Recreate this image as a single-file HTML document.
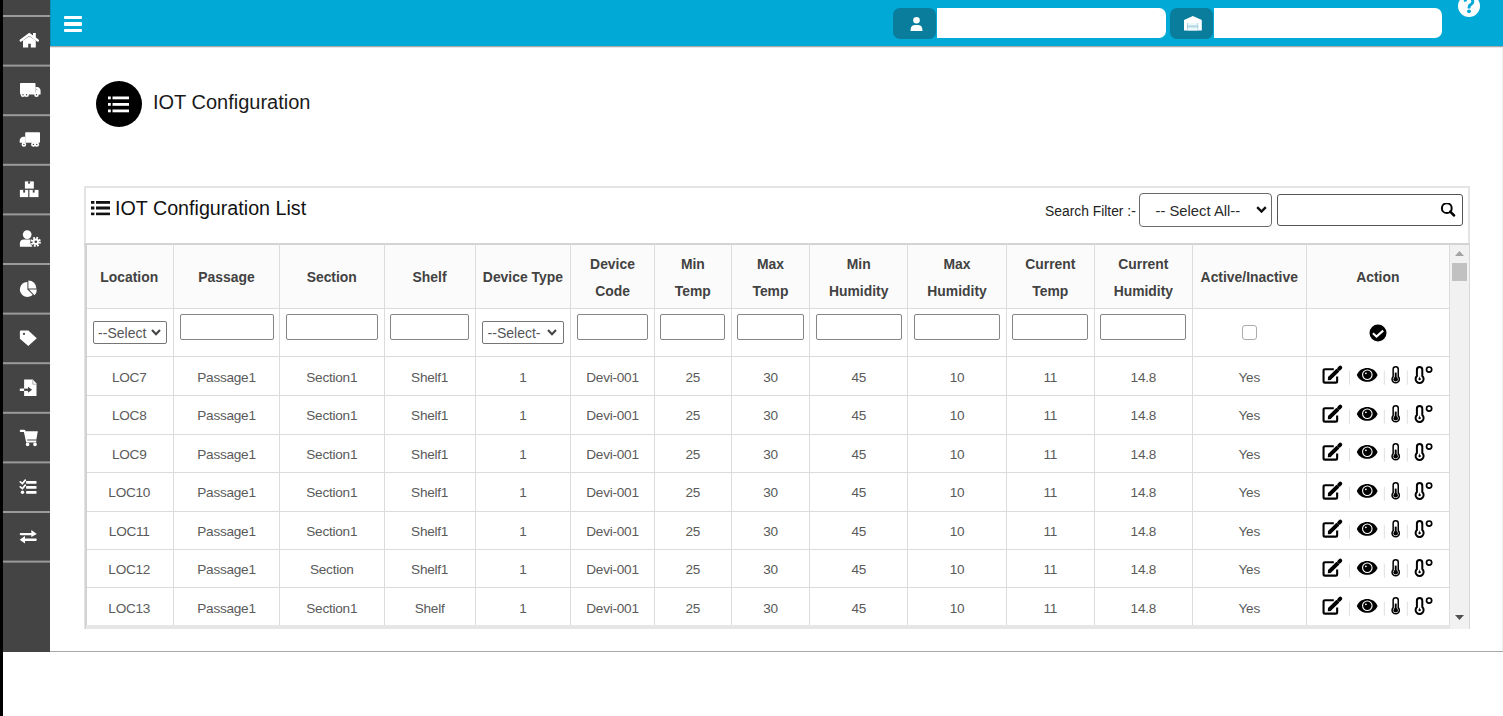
<!DOCTYPE html>
<html><head><meta charset="utf-8"><style>
html,body{margin:0;padding:0;}
body{width:1503px;height:716px;position:relative;overflow:hidden;background:#fff;font-family:"Liberation Sans",sans-serif;}
</style></head><body>
<div style="position:absolute;left:0px;top:0px;width:3px;height:716px;background:#000"></div><div style="position:absolute;left:3px;top:0px;width:47px;height:651.5px;background:#444444"></div><svg style="position:absolute;left:3px;top:0px" width="47" height="600" viewBox="0 0 47 600"><rect x="0" y="15.00" width="47" height="2" fill="#9a9a9a"/><rect x="0" y="64.60" width="47" height="2" fill="#9a9a9a"/><rect x="0" y="114.20" width="47" height="2" fill="#9a9a9a"/><rect x="0" y="163.80" width="47" height="2" fill="#9a9a9a"/><rect x="0" y="213.40" width="47" height="2" fill="#9a9a9a"/><rect x="0" y="263.00" width="47" height="2" fill="#9a9a9a"/><rect x="0" y="312.60" width="47" height="2" fill="#9a9a9a"/><rect x="0" y="362.20" width="47" height="2" fill="#9a9a9a"/><rect x="0" y="411.80" width="47" height="2" fill="#9a9a9a"/><rect x="0" y="461.40" width="47" height="2" fill="#9a9a9a"/><rect x="0" y="511.00" width="47" height="2" fill="#9a9a9a"/><rect x="0" y="560.60" width="47" height="2" fill="#9a9a9a"/></svg><div style="position:absolute;left:16px;top:28px;width:28px;height:24px;line-height:0"><svg width="28" height="24" viewBox="0 0 28 24"><path d="M4.8 12.5 L13.3 6.3 L21.8 12.5" stroke="#fff" stroke-width="2.5" stroke-linecap="round" stroke-linejoin="miter" fill="none"/><rect x="17" y="5" width="2.8" height="5.5" fill="#fff"/><path d="M7 12.6 L13.3 8.3 L19.8 12.6 L19.8 19.5 L14.8 19.5 L14.8 15.8 L12.2 15.8 L12.2 19.5 L7 19.5 Z" fill="#fff"/></svg></div><div style="position:absolute;left:16px;top:78px;width:28px;height:24px;line-height:0"><svg width="28" height="24" viewBox="0 0 28 24"><rect x="4" y="5" width="15.5" height="11.4" rx="0.8" fill="#fff"/><path d="M19.5 8.9 L21.5 8.9 Q24.6 9.6 24.6 13 L24.6 16.4 L19.5 16.4 Z" fill="#fff"/><circle cx="7" cy="16.8" r="2.3" fill="#fff"/><circle cx="10.6" cy="16.8" r="2.3" fill="#fff"/><circle cx="20.5" cy="16.8" r="2.3" fill="#fff"/><circle cx="7" cy="16.8" r="0.7" fill="#444444"/><circle cx="10.6" cy="16.8" r="0.7" fill="#444444"/><circle cx="20.5" cy="16.8" r="0.7" fill="#444444"/><circle cx="20.5" cy="11.5" r="0.8" fill="#bbb"/></svg></div><div style="position:absolute;left:16px;top:127px;width:28px;height:24px;line-height:0"><svg width="28" height="24" viewBox="0 0 28 24"><rect x="9.2" y="5.2" width="14.8" height="10.6" rx="0.8" fill="#fff"/><path d="M9.2 9.7 L7 9.7 Q3.7 10.4 3.7 14 L3.7 15.8 L9.2 15.8 Z" fill="#fff"/><circle cx="7.9" cy="17.4" r="2.3" fill="#fff"/><circle cx="17.4" cy="17.4" r="2.3" fill="#fff"/><circle cx="20.8" cy="17.4" r="2.3" fill="#fff"/><circle cx="7.9" cy="17.4" r="0.7" fill="#444444"/><circle cx="17.4" cy="17.4" r="0.7" fill="#444444"/><circle cx="20.8" cy="17.4" r="0.7" fill="#444444"/></svg></div><div style="position:absolute;left:16px;top:177px;width:28px;height:24px;line-height:0"><svg width="28" height="24" viewBox="0 0 28 24"><rect x="8.9" y="4.4" width="8.9" height="7.2" fill="#fff"/><rect x="3.9" y="12.9" width="8.3" height="7.2" fill="#fff"/><rect x="13.4" y="12.9" width="9.1" height="7.2" fill="#fff"/><rect x="12.1" y="4.4" width="2" height="2.2" fill="#444444"/><rect x="7.2" y="12.9" width="1.9" height="2.7" fill="#444444"/><rect x="16.8" y="12.9" width="1.8" height="2.7" fill="#444444"/></svg></div><div style="position:absolute;left:16px;top:226px;width:28px;height:24px;line-height:0"><svg width="28" height="24" viewBox="0 0 28 24"><circle cx="11.2" cy="8.6" r="4.35" fill="#fff"/><path d="M3.9 20.8 L3.9 17.5 Q3.9 13.4 8 13.4 L13.5 13.4 Q15.5 13.4 16.3 14 L16.3 20.8 Z" fill="#fff"/><circle cx="19.8" cy="15.8" r="5.6" fill="#444444"/><circle cx="19.8" cy="15.8" r="3.9" fill="none" stroke="#fff" stroke-width="2.4" stroke-dasharray="1.7 1.36"/><circle cx="19.8" cy="15.8" r="3.3" fill="#fff"/><circle cx="19.8" cy="15.8" r="1.3" fill="#444444"/></svg></div><div style="position:absolute;left:16px;top:276px;width:28px;height:24px;line-height:0"><svg width="28" height="24" viewBox="0 0 28 24"><path d="M11.4 5.9 A7.5 7.5 0 1 0 16.7 18.7 L11.4 13.4 Z" fill="#fff"/><path d="M12.4 4.5 A8 8 0 0 1 20.4 12.5 L12.4 12.5 Z" fill="#fff"/><path d="M13 13.5 L20.8 13.5 A7.8 7.8 0 0 1 18.5 19.2 Z" fill="#fff"/></svg></div><div style="position:absolute;left:16px;top:326px;width:28px;height:24px;line-height:0"><svg width="28" height="24" viewBox="0 0 28 24"><path d="M3.9 5.4 Q3.9 4.4 4.9 4.4 L12.3 4.4 L20.8 12.3 L12.3 20.1 L3.9 12.7 Z" fill="#fff"/><circle cx="8" cy="7.9" r="1.1" fill="#444444"/></svg></div><div style="position:absolute;left:16px;top:375px;width:28px;height:24px;line-height:0"><svg width="28" height="24" viewBox="0 0 28 24"><path d="M8.1 4.5 L16.8 4.5 L20.5 8.6 L20.5 21 L8.1 21 Z" fill="#fff"/><path d="M16.8 4.5 L16.8 9.2 L20.5 9.2" fill="none" stroke="#9a9a9a" stroke-width="0.8"/><rect x="3.7" y="13.4" width="5" height="2.7" rx="1.2" fill="#fff"/><rect x="8.1" y="13.6" width="4.6" height="2.3" fill="#444444"/><path d="M12 11.7 L16.1 14.75 L12 17.8 Z" fill="#444444"/></svg></div><div style="position:absolute;left:16px;top:425px;width:28px;height:24px;line-height:0"><svg width="28" height="24" viewBox="0 0 28 24"><path d="M3.7 5.9 Q3.7 4.7 4.9 4.7 L8 4.7 Q9.2 4.7 9.5 5.8 L9.6 6.3 L21.8 6.3 L20.4 14.5 L11.2 14.5 L11.4 15.5 L20.3 15.5 L20.3 17.4 L10.2 17.4 L7.9 7 L4.9 7 Q3.7 7 3.7 5.9 Z" fill="#fff"/><circle cx="11.6" cy="19.4" r="1.8" fill="#fff"/><circle cx="19" cy="19.4" r="1.8" fill="#fff"/></svg></div><div style="position:absolute;left:16px;top:475px;width:28px;height:24px;line-height:0"><svg width="28" height="24" viewBox="0 0 28 24"><path d="M4.3 6.9 L6.4 8.6 L9.3 5.1" stroke="#fff" stroke-width="1.7" fill="none" stroke-linecap="round"/><path d="M4.3 11.9 L6.4 13.6 L9.3 10.1" stroke="#fff" stroke-width="1.7" fill="none" stroke-linecap="round"/><circle cx="6.5" cy="17.3" r="1.7" fill="#fff"/><rect x="10.1" y="6" width="10.4" height="2.8" rx="0.6" fill="#fff"/><rect x="10.1" y="11" width="10.4" height="2.8" rx="0.6" fill="#fff"/><rect x="10.1" y="15.9" width="10.4" height="2.9" rx="0.6" fill="#fff"/></svg></div><div style="position:absolute;left:16px;top:524px;width:28px;height:24px;line-height:0"><svg width="28" height="24" viewBox="0 0 28 24"><rect x="3.7" y="8.9" width="13" height="2.3" rx="1.1" fill="#fff"/><path d="M15.3 6.1 L20.8 10 L15.3 13.1 Z" fill="#fff"/><rect x="7.5" y="14.4" width="13.3" height="2.5" rx="1.1" fill="#fff"/><path d="M9 11.9 L3.7 15.7 L9 19.6 Z" fill="#fff"/></svg></div><div style="position:absolute;left:50px;top:0px;width:1453px;height:46px;background:#00a9d6"></div><div style="position:absolute;left:50px;top:0px;width:1px;height:46px;background:#0a8fb5"></div><div style="position:absolute;left:50px;top:46px;width:1453px;height:1px;background:#a9a9a9"></div><div style="position:absolute;left:50px;top:47px;width:1453px;height:1px;background:#e6e6e6"></div><div style="position:absolute;left:64px;top:16px;width:18.3px;height:3.2px;background:#fff;border-radius:1px"></div><div style="position:absolute;left:64px;top:22.4px;width:18.3px;height:3.2px;background:#fff;border-radius:1px"></div><div style="position:absolute;left:64px;top:28.9px;width:18.3px;height:3.2px;background:#fff;border-radius:1px"></div><div style="position:absolute;left:893px;top:7.8px;width:43.4px;height:30.8px;background:#0a7c9c;border-radius:7px"></div><div style="position:absolute;left:937px;top:7.6px;width:228.5px;height:30.8px;background:#fff;border-radius:0 7px 7px 0"></div><div style="position:absolute;left:910px;top:17px;width:13px;height:14px;line-height:0"><svg width="13" height="14" viewBox="0 0 13 14"><circle cx="6.5" cy="3.3" r="3.3" fill="#fff"/><path d="M0.5 14 Q0.5 8 4.5 8 L8.5 8 Q12.5 8 12.5 14 Z" fill="#fff"/></svg></div><div style="position:absolute;left:1170.3px;top:7.8px;width:42.7px;height:30.8px;background:#0a7c9c;border-radius:7px"></div><div style="position:absolute;left:1213.6px;top:7.6px;width:228.9px;height:30.8px;background:#fff;border-radius:0 7px 7px 0"></div><div style="position:absolute;left:1184.2px;top:16.2px;width:18px;height:15px;line-height:0"><svg width="18" height="15" viewBox="0 0 18 15"><path d="M0 4.1 L8.9 0 L17.8 4.1 L17.8 14.4 L0 14.4 Z" fill="#fff"/><rect x="3" y="7" width="11.2" height="7.4" fill="#eef7fa"/><rect x="3" y="9.3" width="11.2" height="2.2" fill="#b5d9e3"/><rect x="3" y="7" width="0.7" height="7.4" fill="#9ccbd9"/><rect x="13.5" y="7" width="0.7" height="7.4" fill="#9ccbd9"/></svg></div><div style="position:absolute;left:1458px;top:-5px;width:22px;height:22px;line-height:0"><svg width="22" height="22" viewBox="0 0 22 22"><circle cx="11" cy="11" r="11" fill="#fff"/><path d="M7.3 6.6 A3.7 3.7 0 1 1 13 9.4 Q11.1 10.4 11.1 12.1 L11.1 13.6" stroke="#00a9d6" stroke-width="2.9" fill="none"/><circle cx="11" cy="16.3" r="1.9" fill="#00a9d6"/></svg></div><div style="position:absolute;left:50px;top:651px;width:1453px;height:1.3px;background:#a8a8a8"></div><div style="position:absolute;left:1502px;top:47px;width:1px;height:604px;background:#efefef"></div><div style="position:absolute;left:96px;top:80.5px;width:46px;height:46px;border-radius:50%;background:#000"></div><div style="position:absolute;left:108px;top:96px;width:21px;height:17px;line-height:0"><svg width="21" height="17" viewBox="0 0 21 17"><rect x="0" y="0.5" width="2.8" height="2.8" fill="#fff"/><rect x="0" y="7" width="2.8" height="2.8" fill="#fff"/><rect x="0" y="13.5" width="2.8" height="2.8" fill="#fff"/><rect x="4.5" y="0.5" width="16.5" height="2.8" fill="#fff"/><rect x="4.5" y="7" width="16.5" height="2.8" fill="#fff"/><rect x="4.5" y="13.5" width="16.5" height="2.8" fill="#fff"/></svg></div><div style="position:absolute;left:153px;top:91px;white-space:nowrap;font-size:20px;color:#1a1a1a;font-family:"Liberation Sans",sans-serif;line-height:23px">IOT Configuration</div><div style="position:absolute;left:84px;top:186px;width:1386px;height:442.5px;border:2px solid #e4e4e4;box-sizing:border-box"></div><div style="position:absolute;left:91px;top:201px;width:19px;height:15px;line-height:0"><svg width="19" height="15" viewBox="0 0 19 15"><rect x="0" y="-0.3" width="3.4" height="3.1" fill="#111"/><rect x="0" y="5.5" width="3.4" height="3" fill="#111"/><rect x="0" y="11.6" width="3.4" height="2.6" fill="#111"/><rect x="5" y="-0.3" width="14" height="3.1" fill="#111"/><rect x="5" y="5.5" width="14" height="3" fill="#111"/><rect x="5" y="11.6" width="14" height="2.6" fill="#111"/></svg></div><div style="position:absolute;left:115px;top:196.8px;white-space:nowrap;font-size:19.7px;color:#111;line-height:23px">IOT Configuration List</div><div style="position:absolute;left:1045px;top:203px;white-space:nowrap;font-size:13.85px;color:#222;line-height:16px">Search Filter :-</div><div style="position:absolute;left:1139px;top:193px;width:133px;height:34px;border:1px solid #6a6a6a;border-radius:4px;box-sizing:border-box;background:#fff"></div><div style="position:absolute;left:1155.5px;top:203px;white-space:nowrap;font-size:14.8px;color:#2a2a2a;line-height:17px">-- Select All--</div><div style="position:absolute;left:1255.5px;top:206px;width:11px;height:8px;line-height:0"><svg width="11" height="8" viewBox="0 0 11 8"><path d="M1.2 1.2 L5.5 5.6 L9.8 1.2" stroke="#111" stroke-width="2.4" fill="none"/></svg></div><div style="position:absolute;left:1277px;top:194px;width:186px;height:32px;border:1px solid #555;border-radius:3px;box-sizing:border-box;background:#fff"></div><div style="position:absolute;left:1440px;top:203px;width:16px;height:15px;line-height:0"><svg width="16" height="15" viewBox="0 0 16 15"><circle cx="6.8" cy="5.2" r="4.9" stroke="#000" stroke-width="2" fill="none"/><path d="M10.2 8.7 L14.1 12.5" stroke="#000" stroke-width="2.5" stroke-linecap="round"/></svg></div><div style="position:absolute;left:86px;top:243.5px;width:1363.5px;height:64.8px;background:#fbfbfb"></div><div style="position:absolute;left:84px;top:243px;width:1386px;height:2px;background:#d3d3d3"></div><div style="position:absolute;left:86px;top:308px;width:1363.5px;height:1px;background:#dcdcdc"></div><div style="position:absolute;left:86px;top:356px;width:1363.5px;height:1px;background:#dcdcdc"></div><div style="position:absolute;left:86px;top:395px;width:1363.5px;height:1px;background:#dcdcdc"></div><div style="position:absolute;left:86px;top:434px;width:1363.5px;height:1px;background:#dcdcdc"></div><div style="position:absolute;left:86px;top:472px;width:1363.5px;height:1px;background:#dcdcdc"></div><div style="position:absolute;left:86px;top:511px;width:1363.5px;height:1px;background:#dcdcdc"></div><div style="position:absolute;left:86px;top:549px;width:1363.5px;height:1px;background:#dcdcdc"></div><div style="position:absolute;left:86px;top:587px;width:1363.5px;height:1px;background:#dcdcdc"></div><div style="position:absolute;left:173px;top:243.5px;width:1px;height:381.5px;background:#dcdcdc"></div><div style="position:absolute;left:279px;top:243.5px;width:1px;height:381.5px;background:#dcdcdc"></div><div style="position:absolute;left:383.5px;top:243.5px;width:1px;height:381.5px;background:#dcdcdc"></div><div style="position:absolute;left:474.7px;top:243.5px;width:1px;height:381.5px;background:#dcdcdc"></div><div style="position:absolute;left:570.1px;top:243.5px;width:1px;height:381.5px;background:#dcdcdc"></div><div style="position:absolute;left:653.9px;top:243.5px;width:1px;height:381.5px;background:#dcdcdc"></div><div style="position:absolute;left:730.8px;top:243.5px;width:1px;height:381.5px;background:#dcdcdc"></div><div style="position:absolute;left:809.1px;top:243.5px;width:1px;height:381.5px;background:#dcdcdc"></div><div style="position:absolute;left:907.3px;top:243.5px;width:1px;height:381.5px;background:#dcdcdc"></div><div style="position:absolute;left:1005.8px;top:243.5px;width:1px;height:381.5px;background:#dcdcdc"></div><div style="position:absolute;left:1093.8px;top:243.5px;width:1px;height:381.5px;background:#dcdcdc"></div><div style="position:absolute;left:1191.9px;top:243.5px;width:1px;height:381.5px;background:#dcdcdc"></div><div style="position:absolute;left:1305.6px;top:243.5px;width:1px;height:381.5px;background:#dcdcdc"></div><div style="position:absolute;left:1449px;top:243.5px;width:1px;height:381.5px;background:#dcdcdc"></div><div style="position:absolute;left:-20.75px;width:300px;text-align:center;top:264px;white-space:nowrap;font-size:13.9px;font-weight:bold;color:#424242;line-height:27px">Location</div><div style="position:absolute;left:76.5px;width:300px;text-align:center;top:264px;white-space:nowrap;font-size:13.9px;font-weight:bold;color:#424242;line-height:27px">Passage</div><div style="position:absolute;left:181.75px;width:300px;text-align:center;top:264px;white-space:nowrap;font-size:13.9px;font-weight:bold;color:#424242;line-height:27px">Section</div><div style="position:absolute;left:279.6px;width:300px;text-align:center;top:264px;white-space:nowrap;font-size:13.9px;font-weight:bold;color:#424242;line-height:27px">Shelf</div><div style="position:absolute;left:372.9px;width:300px;text-align:center;top:264px;white-space:nowrap;font-size:13.9px;font-weight:bold;color:#424242;line-height:27px">Device Type</div><div style="position:absolute;left:462.5px;width:300px;text-align:center;top:251px;white-space:nowrap;font-size:13.9px;font-weight:bold;color:#424242;line-height:27px">Device<br>Code</div><div style="position:absolute;left:542.85px;width:300px;text-align:center;top:251px;white-space:nowrap;font-size:13.9px;font-weight:bold;color:#424242;line-height:27px">Min<br>Temp</div><div style="position:absolute;left:620.45px;width:300px;text-align:center;top:251px;white-space:nowrap;font-size:13.9px;font-weight:bold;color:#424242;line-height:27px">Max<br>Temp</div><div style="position:absolute;left:708.7px;width:300px;text-align:center;top:251px;white-space:nowrap;font-size:13.9px;font-weight:bold;color:#424242;line-height:27px">Min<br>Humidity</div><div style="position:absolute;left:807.05px;width:300px;text-align:center;top:251px;white-space:nowrap;font-size:13.9px;font-weight:bold;color:#424242;line-height:27px">Max<br>Humidity</div><div style="position:absolute;left:900.3px;width:300px;text-align:center;top:251px;white-space:nowrap;font-size:13.9px;font-weight:bold;color:#424242;line-height:27px">Current<br>Temp</div><div style="position:absolute;left:993.35px;width:300px;text-align:center;top:251px;white-space:nowrap;font-size:13.9px;font-weight:bold;color:#424242;line-height:27px">Current<br>Humidity</div><div style="position:absolute;left:1099.25px;width:300px;text-align:center;top:264px;white-space:nowrap;font-size:13.9px;font-weight:bold;color:#424242;line-height:27px">Active/Inactive</div><div style="position:absolute;left:1227.8px;width:300px;text-align:center;top:264px;white-space:nowrap;font-size:13.9px;font-weight:bold;color:#424242;line-height:27px">Action</div><div style="position:absolute;left:92.5px;top:321px;width:74.5px;height:23px;border:1px solid #767676;border-radius:2px;box-sizing:border-box;background:#fff"></div><div style="position:absolute;left:98.1px;top:325px;white-space:nowrap;font-size:14px;color:#555;line-height:16px">--Select</div><div style="position:absolute;left:150.8px;top:329px;width:10px;height:7px;line-height:0"><svg width="10" height="7" viewBox="0 0 10 7"><path d="M1 1 L5 5.2 L9 1" stroke="#444" stroke-width="2.1" fill="none"/></svg></div><div style="position:absolute;left:482px;top:321px;width:81.5px;height:23px;border:1px solid #767676;border-radius:2px;box-sizing:border-box;background:#fff"></div><div style="position:absolute;left:487.6px;top:325px;white-space:nowrap;font-size:14px;color:#555;line-height:16px">--Select-</div><div style="position:absolute;left:547.3px;top:329px;width:10px;height:7px;line-height:0"><svg width="10" height="7" viewBox="0 0 10 7"><path d="M1 1 L5 5.2 L9 1" stroke="#444" stroke-width="2.1" fill="none"/></svg></div><div style="position:absolute;left:179.5px;top:314px;width:94px;height:26px;border:1px solid #858585;border-radius:2px;box-sizing:border-box;background:#fff"></div><div style="position:absolute;left:285.5px;top:314px;width:92.5px;height:26px;border:1px solid #858585;border-radius:2px;box-sizing:border-box;background:#fff"></div><div style="position:absolute;left:390px;top:314px;width:79.2px;height:26px;border:1px solid #858585;border-radius:2px;box-sizing:border-box;background:#fff"></div><div style="position:absolute;left:576.6px;top:314px;width:71.8px;height:26px;border:1px solid #858585;border-radius:2px;box-sizing:border-box;background:#fff"></div><div style="position:absolute;left:660.4px;top:314px;width:64.9px;height:26px;border:1px solid #858585;border-radius:2px;box-sizing:border-box;background:#fff"></div><div style="position:absolute;left:737.3px;top:314px;width:66.3px;height:26px;border:1px solid #858585;border-radius:2px;box-sizing:border-box;background:#fff"></div><div style="position:absolute;left:815.6px;top:314px;width:86.2px;height:26px;border:1px solid #858585;border-radius:2px;box-sizing:border-box;background:#fff"></div><div style="position:absolute;left:913.8px;top:314px;width:86.5px;height:26px;border:1px solid #858585;border-radius:2px;box-sizing:border-box;background:#fff"></div><div style="position:absolute;left:1012.3px;top:314px;width:76px;height:26px;border:1px solid #858585;border-radius:2px;box-sizing:border-box;background:#fff"></div><div style="position:absolute;left:1100.3px;top:314px;width:86.1px;height:26px;border:1px solid #858585;border-radius:2px;box-sizing:border-box;background:#fff"></div><div style="position:absolute;left:1242px;top:325px;width:15px;height:15px;border:1.8px solid #ababab;border-radius:3px;box-sizing:border-box;background:#fff"></div><div style="position:absolute;left:1368.5px;top:324px;width:18px;height:18px;line-height:0"><svg width="18" height="18" viewBox="0 0 18 18"><circle cx="9" cy="8.9" r="8.5" fill="#000"/><path d="M3.9 9.3 L7.5 12.6 L14.2 6.6" stroke="#fff" stroke-width="2.1" fill="none"/></svg></div><div style="position:absolute;left:-20.75px;width:300px;text-align:center;top:369.5px;white-space:nowrap;font-size:13.6px;letter-spacing:-0.25px;color:#5a5a5a;line-height:16px">LOC7</div><div style="position:absolute;left:76.5px;width:300px;text-align:center;top:369.5px;white-space:nowrap;font-size:13.6px;letter-spacing:-0.25px;color:#5a5a5a;line-height:16px">Passage1</div><div style="position:absolute;left:181.75px;width:300px;text-align:center;top:369.5px;white-space:nowrap;font-size:13.6px;letter-spacing:-0.25px;color:#5a5a5a;line-height:16px">Section1</div><div style="position:absolute;left:279.6px;width:300px;text-align:center;top:369.5px;white-space:nowrap;font-size:13.6px;letter-spacing:-0.25px;color:#5a5a5a;line-height:16px">Shelf1</div><div style="position:absolute;left:372.9px;width:300px;text-align:center;top:369.5px;white-space:nowrap;font-size:13.6px;letter-spacing:-0.25px;color:#5a5a5a;line-height:16px">1</div><div style="position:absolute;left:462.5px;width:300px;text-align:center;top:369.5px;white-space:nowrap;font-size:13.6px;letter-spacing:-0.25px;color:#5a5a5a;line-height:16px">Devi-001</div><div style="position:absolute;left:542.85px;width:300px;text-align:center;top:369.5px;white-space:nowrap;font-size:13.6px;letter-spacing:-0.25px;color:#5a5a5a;line-height:16px">25</div><div style="position:absolute;left:620.45px;width:300px;text-align:center;top:369.5px;white-space:nowrap;font-size:13.6px;letter-spacing:-0.25px;color:#5a5a5a;line-height:16px">30</div><div style="position:absolute;left:708.7px;width:300px;text-align:center;top:369.5px;white-space:nowrap;font-size:13.6px;letter-spacing:-0.25px;color:#5a5a5a;line-height:16px">45</div><div style="position:absolute;left:807.05px;width:300px;text-align:center;top:369.5px;white-space:nowrap;font-size:13.6px;letter-spacing:-0.25px;color:#5a5a5a;line-height:16px">10</div><div style="position:absolute;left:900.3px;width:300px;text-align:center;top:369.5px;white-space:nowrap;font-size:13.6px;letter-spacing:-0.25px;color:#5a5a5a;line-height:16px">11</div><div style="position:absolute;left:993.35px;width:300px;text-align:center;top:369.5px;white-space:nowrap;font-size:13.6px;letter-spacing:-0.25px;color:#5a5a5a;line-height:16px">14.8</div><div style="position:absolute;left:1099.25px;width:300px;text-align:center;top:369.5px;white-space:nowrap;font-size:13.6px;letter-spacing:-0.25px;color:#5a5a5a;line-height:16px">Yes</div><div style="position:absolute;left:1318px;top:362.0px;width:120px;height:26px;line-height:0"><svg width="120" height="26" viewBox="0 0 120 26"><path d="M15.8 7.25 L7 7.25 Q5.55 7.25 5.55 8.7 L5.55 19.2 Q5.55 20.65 7 20.65 L17.7 20.65 Q19.15 20.65 19.15 19.2 L19.15 14.5" stroke="#000" stroke-width="2.1" fill="none"/><path d="M11.2 16.7 L19.9 8.1" stroke="#000" stroke-width="4" fill="none"/><path d="M9.8 18.3 L10.1 14.6 L13.4 17.9 Z" fill="#000"/><path d="M21.1 6.8 L22.3 5.6" stroke="#000" stroke-width="3.9" stroke-linecap="round" fill="none"/><rect x="31" y="8.7" width="1" height="13.9" fill="#e2dede"/><path d="M38.8 12.9 C41 8, 45 6, 49.2 6 C53.4 6, 57.4 8, 59.6 12.9 C57.4 17.8, 53.4 19.8, 49.2 19.8 C45 19.8, 41 17.8, 38.8 12.9 Z" fill="#000"/><circle cx="49.3" cy="12.8" r="5.3" fill="#fff"/><circle cx="49.3" cy="12.8" r="4.2" fill="#000"/><circle cx="47.9" cy="11.3" r="0.9" fill="#fff"/><rect x="65.8" y="8.7" width="1" height="14" fill="#e2dede"/><path d="M75.15 7.3 A2.55 2.55 0 0 1 80.25 7.3 L80.25 14.6 A3.65 3.65 0 1 1 75.15 14.6 Z" fill="none" stroke="#000" stroke-width="1.5"/><rect x="76.75" y="10.6" width="1.9" height="6.6" fill="#000"/><circle cx="77.7" cy="17.2" r="2.3" fill="#000"/><rect x="88.8" y="8.7" width="1" height="14" fill="#e2dede"/><path d="M98.9 7.7 A2.7 2.7 0 0 1 104.3 7.7 L104.3 14.05 A4 4 0 1 1 98.9 14.05 Z" fill="none" stroke="#000" stroke-width="2"/><circle cx="101.6" cy="17.1" r="1.2" fill="#000"/><path d="M101 16.6 L101.6 14.2 L102.2 16.6 Z" fill="#000"/><circle cx="111.1" cy="7.6" r="2.6" fill="none" stroke="#000" stroke-width="1.7"/></svg></div><div style="position:absolute;left:-20.75px;width:300px;text-align:center;top:408.05px;white-space:nowrap;font-size:13.6px;letter-spacing:-0.25px;color:#5a5a5a;line-height:16px">LOC8</div><div style="position:absolute;left:76.5px;width:300px;text-align:center;top:408.05px;white-space:nowrap;font-size:13.6px;letter-spacing:-0.25px;color:#5a5a5a;line-height:16px">Passage1</div><div style="position:absolute;left:181.75px;width:300px;text-align:center;top:408.05px;white-space:nowrap;font-size:13.6px;letter-spacing:-0.25px;color:#5a5a5a;line-height:16px">Section1</div><div style="position:absolute;left:279.6px;width:300px;text-align:center;top:408.05px;white-space:nowrap;font-size:13.6px;letter-spacing:-0.25px;color:#5a5a5a;line-height:16px">Shelf1</div><div style="position:absolute;left:372.9px;width:300px;text-align:center;top:408.05px;white-space:nowrap;font-size:13.6px;letter-spacing:-0.25px;color:#5a5a5a;line-height:16px">1</div><div style="position:absolute;left:462.5px;width:300px;text-align:center;top:408.05px;white-space:nowrap;font-size:13.6px;letter-spacing:-0.25px;color:#5a5a5a;line-height:16px">Devi-001</div><div style="position:absolute;left:542.85px;width:300px;text-align:center;top:408.05px;white-space:nowrap;font-size:13.6px;letter-spacing:-0.25px;color:#5a5a5a;line-height:16px">25</div><div style="position:absolute;left:620.45px;width:300px;text-align:center;top:408.05px;white-space:nowrap;font-size:13.6px;letter-spacing:-0.25px;color:#5a5a5a;line-height:16px">30</div><div style="position:absolute;left:708.7px;width:300px;text-align:center;top:408.05px;white-space:nowrap;font-size:13.6px;letter-spacing:-0.25px;color:#5a5a5a;line-height:16px">45</div><div style="position:absolute;left:807.05px;width:300px;text-align:center;top:408.05px;white-space:nowrap;font-size:13.6px;letter-spacing:-0.25px;color:#5a5a5a;line-height:16px">10</div><div style="position:absolute;left:900.3px;width:300px;text-align:center;top:408.05px;white-space:nowrap;font-size:13.6px;letter-spacing:-0.25px;color:#5a5a5a;line-height:16px">11</div><div style="position:absolute;left:993.35px;width:300px;text-align:center;top:408.05px;white-space:nowrap;font-size:13.6px;letter-spacing:-0.25px;color:#5a5a5a;line-height:16px">14.8</div><div style="position:absolute;left:1099.25px;width:300px;text-align:center;top:408.05px;white-space:nowrap;font-size:13.6px;letter-spacing:-0.25px;color:#5a5a5a;line-height:16px">Yes</div><div style="position:absolute;left:1318px;top:400.55px;width:120px;height:26px;line-height:0"><svg width="120" height="26" viewBox="0 0 120 26"><path d="M15.8 7.25 L7 7.25 Q5.55 7.25 5.55 8.7 L5.55 19.2 Q5.55 20.65 7 20.65 L17.7 20.65 Q19.15 20.65 19.15 19.2 L19.15 14.5" stroke="#000" stroke-width="2.1" fill="none"/><path d="M11.2 16.7 L19.9 8.1" stroke="#000" stroke-width="4" fill="none"/><path d="M9.8 18.3 L10.1 14.6 L13.4 17.9 Z" fill="#000"/><path d="M21.1 6.8 L22.3 5.6" stroke="#000" stroke-width="3.9" stroke-linecap="round" fill="none"/><rect x="31" y="8.7" width="1" height="13.9" fill="#e2dede"/><path d="M38.8 12.9 C41 8, 45 6, 49.2 6 C53.4 6, 57.4 8, 59.6 12.9 C57.4 17.8, 53.4 19.8, 49.2 19.8 C45 19.8, 41 17.8, 38.8 12.9 Z" fill="#000"/><circle cx="49.3" cy="12.8" r="5.3" fill="#fff"/><circle cx="49.3" cy="12.8" r="4.2" fill="#000"/><circle cx="47.9" cy="11.3" r="0.9" fill="#fff"/><rect x="65.8" y="8.7" width="1" height="14" fill="#e2dede"/><path d="M75.15 7.3 A2.55 2.55 0 0 1 80.25 7.3 L80.25 14.6 A3.65 3.65 0 1 1 75.15 14.6 Z" fill="none" stroke="#000" stroke-width="1.5"/><rect x="76.75" y="10.6" width="1.9" height="6.6" fill="#000"/><circle cx="77.7" cy="17.2" r="2.3" fill="#000"/><rect x="88.8" y="8.7" width="1" height="14" fill="#e2dede"/><path d="M98.9 7.7 A2.7 2.7 0 0 1 104.3 7.7 L104.3 14.05 A4 4 0 1 1 98.9 14.05 Z" fill="none" stroke="#000" stroke-width="2"/><circle cx="101.6" cy="17.1" r="1.2" fill="#000"/><path d="M101 16.6 L101.6 14.2 L102.2 16.6 Z" fill="#000"/><circle cx="111.1" cy="7.6" r="2.6" fill="none" stroke="#000" stroke-width="1.7"/></svg></div><div style="position:absolute;left:-20.75px;width:300px;text-align:center;top:446.6px;white-space:nowrap;font-size:13.6px;letter-spacing:-0.25px;color:#5a5a5a;line-height:16px">LOC9</div><div style="position:absolute;left:76.5px;width:300px;text-align:center;top:446.6px;white-space:nowrap;font-size:13.6px;letter-spacing:-0.25px;color:#5a5a5a;line-height:16px">Passage1</div><div style="position:absolute;left:181.75px;width:300px;text-align:center;top:446.6px;white-space:nowrap;font-size:13.6px;letter-spacing:-0.25px;color:#5a5a5a;line-height:16px">Section1</div><div style="position:absolute;left:279.6px;width:300px;text-align:center;top:446.6px;white-space:nowrap;font-size:13.6px;letter-spacing:-0.25px;color:#5a5a5a;line-height:16px">Shelf1</div><div style="position:absolute;left:372.9px;width:300px;text-align:center;top:446.6px;white-space:nowrap;font-size:13.6px;letter-spacing:-0.25px;color:#5a5a5a;line-height:16px">1</div><div style="position:absolute;left:462.5px;width:300px;text-align:center;top:446.6px;white-space:nowrap;font-size:13.6px;letter-spacing:-0.25px;color:#5a5a5a;line-height:16px">Devi-001</div><div style="position:absolute;left:542.85px;width:300px;text-align:center;top:446.6px;white-space:nowrap;font-size:13.6px;letter-spacing:-0.25px;color:#5a5a5a;line-height:16px">25</div><div style="position:absolute;left:620.45px;width:300px;text-align:center;top:446.6px;white-space:nowrap;font-size:13.6px;letter-spacing:-0.25px;color:#5a5a5a;line-height:16px">30</div><div style="position:absolute;left:708.7px;width:300px;text-align:center;top:446.6px;white-space:nowrap;font-size:13.6px;letter-spacing:-0.25px;color:#5a5a5a;line-height:16px">45</div><div style="position:absolute;left:807.05px;width:300px;text-align:center;top:446.6px;white-space:nowrap;font-size:13.6px;letter-spacing:-0.25px;color:#5a5a5a;line-height:16px">10</div><div style="position:absolute;left:900.3px;width:300px;text-align:center;top:446.6px;white-space:nowrap;font-size:13.6px;letter-spacing:-0.25px;color:#5a5a5a;line-height:16px">11</div><div style="position:absolute;left:993.35px;width:300px;text-align:center;top:446.6px;white-space:nowrap;font-size:13.6px;letter-spacing:-0.25px;color:#5a5a5a;line-height:16px">14.8</div><div style="position:absolute;left:1099.25px;width:300px;text-align:center;top:446.6px;white-space:nowrap;font-size:13.6px;letter-spacing:-0.25px;color:#5a5a5a;line-height:16px">Yes</div><div style="position:absolute;left:1318px;top:439.1px;width:120px;height:26px;line-height:0"><svg width="120" height="26" viewBox="0 0 120 26"><path d="M15.8 7.25 L7 7.25 Q5.55 7.25 5.55 8.7 L5.55 19.2 Q5.55 20.65 7 20.65 L17.7 20.65 Q19.15 20.65 19.15 19.2 L19.15 14.5" stroke="#000" stroke-width="2.1" fill="none"/><path d="M11.2 16.7 L19.9 8.1" stroke="#000" stroke-width="4" fill="none"/><path d="M9.8 18.3 L10.1 14.6 L13.4 17.9 Z" fill="#000"/><path d="M21.1 6.8 L22.3 5.6" stroke="#000" stroke-width="3.9" stroke-linecap="round" fill="none"/><rect x="31" y="8.7" width="1" height="13.9" fill="#e2dede"/><path d="M38.8 12.9 C41 8, 45 6, 49.2 6 C53.4 6, 57.4 8, 59.6 12.9 C57.4 17.8, 53.4 19.8, 49.2 19.8 C45 19.8, 41 17.8, 38.8 12.9 Z" fill="#000"/><circle cx="49.3" cy="12.8" r="5.3" fill="#fff"/><circle cx="49.3" cy="12.8" r="4.2" fill="#000"/><circle cx="47.9" cy="11.3" r="0.9" fill="#fff"/><rect x="65.8" y="8.7" width="1" height="14" fill="#e2dede"/><path d="M75.15 7.3 A2.55 2.55 0 0 1 80.25 7.3 L80.25 14.6 A3.65 3.65 0 1 1 75.15 14.6 Z" fill="none" stroke="#000" stroke-width="1.5"/><rect x="76.75" y="10.6" width="1.9" height="6.6" fill="#000"/><circle cx="77.7" cy="17.2" r="2.3" fill="#000"/><rect x="88.8" y="8.7" width="1" height="14" fill="#e2dede"/><path d="M98.9 7.7 A2.7 2.7 0 0 1 104.3 7.7 L104.3 14.05 A4 4 0 1 1 98.9 14.05 Z" fill="none" stroke="#000" stroke-width="2"/><circle cx="101.6" cy="17.1" r="1.2" fill="#000"/><path d="M101 16.6 L101.6 14.2 L102.2 16.6 Z" fill="#000"/><circle cx="111.1" cy="7.6" r="2.6" fill="none" stroke="#000" stroke-width="1.7"/></svg></div><div style="position:absolute;left:-20.75px;width:300px;text-align:center;top:485.15px;white-space:nowrap;font-size:13.6px;letter-spacing:-0.25px;color:#5a5a5a;line-height:16px">LOC10</div><div style="position:absolute;left:76.5px;width:300px;text-align:center;top:485.15px;white-space:nowrap;font-size:13.6px;letter-spacing:-0.25px;color:#5a5a5a;line-height:16px">Passage1</div><div style="position:absolute;left:181.75px;width:300px;text-align:center;top:485.15px;white-space:nowrap;font-size:13.6px;letter-spacing:-0.25px;color:#5a5a5a;line-height:16px">Section1</div><div style="position:absolute;left:279.6px;width:300px;text-align:center;top:485.15px;white-space:nowrap;font-size:13.6px;letter-spacing:-0.25px;color:#5a5a5a;line-height:16px">Shelf1</div><div style="position:absolute;left:372.9px;width:300px;text-align:center;top:485.15px;white-space:nowrap;font-size:13.6px;letter-spacing:-0.25px;color:#5a5a5a;line-height:16px">1</div><div style="position:absolute;left:462.5px;width:300px;text-align:center;top:485.15px;white-space:nowrap;font-size:13.6px;letter-spacing:-0.25px;color:#5a5a5a;line-height:16px">Devi-001</div><div style="position:absolute;left:542.85px;width:300px;text-align:center;top:485.15px;white-space:nowrap;font-size:13.6px;letter-spacing:-0.25px;color:#5a5a5a;line-height:16px">25</div><div style="position:absolute;left:620.45px;width:300px;text-align:center;top:485.15px;white-space:nowrap;font-size:13.6px;letter-spacing:-0.25px;color:#5a5a5a;line-height:16px">30</div><div style="position:absolute;left:708.7px;width:300px;text-align:center;top:485.15px;white-space:nowrap;font-size:13.6px;letter-spacing:-0.25px;color:#5a5a5a;line-height:16px">45</div><div style="position:absolute;left:807.05px;width:300px;text-align:center;top:485.15px;white-space:nowrap;font-size:13.6px;letter-spacing:-0.25px;color:#5a5a5a;line-height:16px">10</div><div style="position:absolute;left:900.3px;width:300px;text-align:center;top:485.15px;white-space:nowrap;font-size:13.6px;letter-spacing:-0.25px;color:#5a5a5a;line-height:16px">11</div><div style="position:absolute;left:993.35px;width:300px;text-align:center;top:485.15px;white-space:nowrap;font-size:13.6px;letter-spacing:-0.25px;color:#5a5a5a;line-height:16px">14.8</div><div style="position:absolute;left:1099.25px;width:300px;text-align:center;top:485.15px;white-space:nowrap;font-size:13.6px;letter-spacing:-0.25px;color:#5a5a5a;line-height:16px">Yes</div><div style="position:absolute;left:1318px;top:477.65px;width:120px;height:26px;line-height:0"><svg width="120" height="26" viewBox="0 0 120 26"><path d="M15.8 7.25 L7 7.25 Q5.55 7.25 5.55 8.7 L5.55 19.2 Q5.55 20.65 7 20.65 L17.7 20.65 Q19.15 20.65 19.15 19.2 L19.15 14.5" stroke="#000" stroke-width="2.1" fill="none"/><path d="M11.2 16.7 L19.9 8.1" stroke="#000" stroke-width="4" fill="none"/><path d="M9.8 18.3 L10.1 14.6 L13.4 17.9 Z" fill="#000"/><path d="M21.1 6.8 L22.3 5.6" stroke="#000" stroke-width="3.9" stroke-linecap="round" fill="none"/><rect x="31" y="8.7" width="1" height="13.9" fill="#e2dede"/><path d="M38.8 12.9 C41 8, 45 6, 49.2 6 C53.4 6, 57.4 8, 59.6 12.9 C57.4 17.8, 53.4 19.8, 49.2 19.8 C45 19.8, 41 17.8, 38.8 12.9 Z" fill="#000"/><circle cx="49.3" cy="12.8" r="5.3" fill="#fff"/><circle cx="49.3" cy="12.8" r="4.2" fill="#000"/><circle cx="47.9" cy="11.3" r="0.9" fill="#fff"/><rect x="65.8" y="8.7" width="1" height="14" fill="#e2dede"/><path d="M75.15 7.3 A2.55 2.55 0 0 1 80.25 7.3 L80.25 14.6 A3.65 3.65 0 1 1 75.15 14.6 Z" fill="none" stroke="#000" stroke-width="1.5"/><rect x="76.75" y="10.6" width="1.9" height="6.6" fill="#000"/><circle cx="77.7" cy="17.2" r="2.3" fill="#000"/><rect x="88.8" y="8.7" width="1" height="14" fill="#e2dede"/><path d="M98.9 7.7 A2.7 2.7 0 0 1 104.3 7.7 L104.3 14.05 A4 4 0 1 1 98.9 14.05 Z" fill="none" stroke="#000" stroke-width="2"/><circle cx="101.6" cy="17.1" r="1.2" fill="#000"/><path d="M101 16.6 L101.6 14.2 L102.2 16.6 Z" fill="#000"/><circle cx="111.1" cy="7.6" r="2.6" fill="none" stroke="#000" stroke-width="1.7"/></svg></div><div style="position:absolute;left:-20.75px;width:300px;text-align:center;top:523.7px;white-space:nowrap;font-size:13.6px;letter-spacing:-0.25px;color:#5a5a5a;line-height:16px">LOC11</div><div style="position:absolute;left:76.5px;width:300px;text-align:center;top:523.7px;white-space:nowrap;font-size:13.6px;letter-spacing:-0.25px;color:#5a5a5a;line-height:16px">Passage1</div><div style="position:absolute;left:181.75px;width:300px;text-align:center;top:523.7px;white-space:nowrap;font-size:13.6px;letter-spacing:-0.25px;color:#5a5a5a;line-height:16px">Section1</div><div style="position:absolute;left:279.6px;width:300px;text-align:center;top:523.7px;white-space:nowrap;font-size:13.6px;letter-spacing:-0.25px;color:#5a5a5a;line-height:16px">Shelf1</div><div style="position:absolute;left:372.9px;width:300px;text-align:center;top:523.7px;white-space:nowrap;font-size:13.6px;letter-spacing:-0.25px;color:#5a5a5a;line-height:16px">1</div><div style="position:absolute;left:462.5px;width:300px;text-align:center;top:523.7px;white-space:nowrap;font-size:13.6px;letter-spacing:-0.25px;color:#5a5a5a;line-height:16px">Devi-001</div><div style="position:absolute;left:542.85px;width:300px;text-align:center;top:523.7px;white-space:nowrap;font-size:13.6px;letter-spacing:-0.25px;color:#5a5a5a;line-height:16px">25</div><div style="position:absolute;left:620.45px;width:300px;text-align:center;top:523.7px;white-space:nowrap;font-size:13.6px;letter-spacing:-0.25px;color:#5a5a5a;line-height:16px">30</div><div style="position:absolute;left:708.7px;width:300px;text-align:center;top:523.7px;white-space:nowrap;font-size:13.6px;letter-spacing:-0.25px;color:#5a5a5a;line-height:16px">45</div><div style="position:absolute;left:807.05px;width:300px;text-align:center;top:523.7px;white-space:nowrap;font-size:13.6px;letter-spacing:-0.25px;color:#5a5a5a;line-height:16px">10</div><div style="position:absolute;left:900.3px;width:300px;text-align:center;top:523.7px;white-space:nowrap;font-size:13.6px;letter-spacing:-0.25px;color:#5a5a5a;line-height:16px">11</div><div style="position:absolute;left:993.35px;width:300px;text-align:center;top:523.7px;white-space:nowrap;font-size:13.6px;letter-spacing:-0.25px;color:#5a5a5a;line-height:16px">14.8</div><div style="position:absolute;left:1099.25px;width:300px;text-align:center;top:523.7px;white-space:nowrap;font-size:13.6px;letter-spacing:-0.25px;color:#5a5a5a;line-height:16px">Yes</div><div style="position:absolute;left:1318px;top:516.2px;width:120px;height:26px;line-height:0"><svg width="120" height="26" viewBox="0 0 120 26"><path d="M15.8 7.25 L7 7.25 Q5.55 7.25 5.55 8.7 L5.55 19.2 Q5.55 20.65 7 20.65 L17.7 20.65 Q19.15 20.65 19.15 19.2 L19.15 14.5" stroke="#000" stroke-width="2.1" fill="none"/><path d="M11.2 16.7 L19.9 8.1" stroke="#000" stroke-width="4" fill="none"/><path d="M9.8 18.3 L10.1 14.6 L13.4 17.9 Z" fill="#000"/><path d="M21.1 6.8 L22.3 5.6" stroke="#000" stroke-width="3.9" stroke-linecap="round" fill="none"/><rect x="31" y="8.7" width="1" height="13.9" fill="#e2dede"/><path d="M38.8 12.9 C41 8, 45 6, 49.2 6 C53.4 6, 57.4 8, 59.6 12.9 C57.4 17.8, 53.4 19.8, 49.2 19.8 C45 19.8, 41 17.8, 38.8 12.9 Z" fill="#000"/><circle cx="49.3" cy="12.8" r="5.3" fill="#fff"/><circle cx="49.3" cy="12.8" r="4.2" fill="#000"/><circle cx="47.9" cy="11.3" r="0.9" fill="#fff"/><rect x="65.8" y="8.7" width="1" height="14" fill="#e2dede"/><path d="M75.15 7.3 A2.55 2.55 0 0 1 80.25 7.3 L80.25 14.6 A3.65 3.65 0 1 1 75.15 14.6 Z" fill="none" stroke="#000" stroke-width="1.5"/><rect x="76.75" y="10.6" width="1.9" height="6.6" fill="#000"/><circle cx="77.7" cy="17.2" r="2.3" fill="#000"/><rect x="88.8" y="8.7" width="1" height="14" fill="#e2dede"/><path d="M98.9 7.7 A2.7 2.7 0 0 1 104.3 7.7 L104.3 14.05 A4 4 0 1 1 98.9 14.05 Z" fill="none" stroke="#000" stroke-width="2"/><circle cx="101.6" cy="17.1" r="1.2" fill="#000"/><path d="M101 16.6 L101.6 14.2 L102.2 16.6 Z" fill="#000"/><circle cx="111.1" cy="7.6" r="2.6" fill="none" stroke="#000" stroke-width="1.7"/></svg></div><div style="position:absolute;left:-20.75px;width:300px;text-align:center;top:562.25px;white-space:nowrap;font-size:13.6px;letter-spacing:-0.25px;color:#5a5a5a;line-height:16px">LOC12</div><div style="position:absolute;left:76.5px;width:300px;text-align:center;top:562.25px;white-space:nowrap;font-size:13.6px;letter-spacing:-0.25px;color:#5a5a5a;line-height:16px">Passage1</div><div style="position:absolute;left:181.75px;width:300px;text-align:center;top:562.25px;white-space:nowrap;font-size:13.6px;letter-spacing:-0.25px;color:#5a5a5a;line-height:16px">Section</div><div style="position:absolute;left:279.6px;width:300px;text-align:center;top:562.25px;white-space:nowrap;font-size:13.6px;letter-spacing:-0.25px;color:#5a5a5a;line-height:16px">Shelf1</div><div style="position:absolute;left:372.9px;width:300px;text-align:center;top:562.25px;white-space:nowrap;font-size:13.6px;letter-spacing:-0.25px;color:#5a5a5a;line-height:16px">1</div><div style="position:absolute;left:462.5px;width:300px;text-align:center;top:562.25px;white-space:nowrap;font-size:13.6px;letter-spacing:-0.25px;color:#5a5a5a;line-height:16px">Devi-001</div><div style="position:absolute;left:542.85px;width:300px;text-align:center;top:562.25px;white-space:nowrap;font-size:13.6px;letter-spacing:-0.25px;color:#5a5a5a;line-height:16px">25</div><div style="position:absolute;left:620.45px;width:300px;text-align:center;top:562.25px;white-space:nowrap;font-size:13.6px;letter-spacing:-0.25px;color:#5a5a5a;line-height:16px">30</div><div style="position:absolute;left:708.7px;width:300px;text-align:center;top:562.25px;white-space:nowrap;font-size:13.6px;letter-spacing:-0.25px;color:#5a5a5a;line-height:16px">45</div><div style="position:absolute;left:807.05px;width:300px;text-align:center;top:562.25px;white-space:nowrap;font-size:13.6px;letter-spacing:-0.25px;color:#5a5a5a;line-height:16px">10</div><div style="position:absolute;left:900.3px;width:300px;text-align:center;top:562.25px;white-space:nowrap;font-size:13.6px;letter-spacing:-0.25px;color:#5a5a5a;line-height:16px">11</div><div style="position:absolute;left:993.35px;width:300px;text-align:center;top:562.25px;white-space:nowrap;font-size:13.6px;letter-spacing:-0.25px;color:#5a5a5a;line-height:16px">14.8</div><div style="position:absolute;left:1099.25px;width:300px;text-align:center;top:562.25px;white-space:nowrap;font-size:13.6px;letter-spacing:-0.25px;color:#5a5a5a;line-height:16px">Yes</div><div style="position:absolute;left:1318px;top:554.75px;width:120px;height:26px;line-height:0"><svg width="120" height="26" viewBox="0 0 120 26"><path d="M15.8 7.25 L7 7.25 Q5.55 7.25 5.55 8.7 L5.55 19.2 Q5.55 20.65 7 20.65 L17.7 20.65 Q19.15 20.65 19.15 19.2 L19.15 14.5" stroke="#000" stroke-width="2.1" fill="none"/><path d="M11.2 16.7 L19.9 8.1" stroke="#000" stroke-width="4" fill="none"/><path d="M9.8 18.3 L10.1 14.6 L13.4 17.9 Z" fill="#000"/><path d="M21.1 6.8 L22.3 5.6" stroke="#000" stroke-width="3.9" stroke-linecap="round" fill="none"/><rect x="31" y="8.7" width="1" height="13.9" fill="#e2dede"/><path d="M38.8 12.9 C41 8, 45 6, 49.2 6 C53.4 6, 57.4 8, 59.6 12.9 C57.4 17.8, 53.4 19.8, 49.2 19.8 C45 19.8, 41 17.8, 38.8 12.9 Z" fill="#000"/><circle cx="49.3" cy="12.8" r="5.3" fill="#fff"/><circle cx="49.3" cy="12.8" r="4.2" fill="#000"/><circle cx="47.9" cy="11.3" r="0.9" fill="#fff"/><rect x="65.8" y="8.7" width="1" height="14" fill="#e2dede"/><path d="M75.15 7.3 A2.55 2.55 0 0 1 80.25 7.3 L80.25 14.6 A3.65 3.65 0 1 1 75.15 14.6 Z" fill="none" stroke="#000" stroke-width="1.5"/><rect x="76.75" y="10.6" width="1.9" height="6.6" fill="#000"/><circle cx="77.7" cy="17.2" r="2.3" fill="#000"/><rect x="88.8" y="8.7" width="1" height="14" fill="#e2dede"/><path d="M98.9 7.7 A2.7 2.7 0 0 1 104.3 7.7 L104.3 14.05 A4 4 0 1 1 98.9 14.05 Z" fill="none" stroke="#000" stroke-width="2"/><circle cx="101.6" cy="17.1" r="1.2" fill="#000"/><path d="M101 16.6 L101.6 14.2 L102.2 16.6 Z" fill="#000"/><circle cx="111.1" cy="7.6" r="2.6" fill="none" stroke="#000" stroke-width="1.7"/></svg></div><div style="position:absolute;left:-20.75px;width:300px;text-align:center;top:600.8px;white-space:nowrap;font-size:13.6px;letter-spacing:-0.25px;color:#5a5a5a;line-height:16px">LOC13</div><div style="position:absolute;left:76.5px;width:300px;text-align:center;top:600.8px;white-space:nowrap;font-size:13.6px;letter-spacing:-0.25px;color:#5a5a5a;line-height:16px">Passage1</div><div style="position:absolute;left:181.75px;width:300px;text-align:center;top:600.8px;white-space:nowrap;font-size:13.6px;letter-spacing:-0.25px;color:#5a5a5a;line-height:16px">Section1</div><div style="position:absolute;left:279.6px;width:300px;text-align:center;top:600.8px;white-space:nowrap;font-size:13.6px;letter-spacing:-0.25px;color:#5a5a5a;line-height:16px">Shelf</div><div style="position:absolute;left:372.9px;width:300px;text-align:center;top:600.8px;white-space:nowrap;font-size:13.6px;letter-spacing:-0.25px;color:#5a5a5a;line-height:16px">1</div><div style="position:absolute;left:462.5px;width:300px;text-align:center;top:600.8px;white-space:nowrap;font-size:13.6px;letter-spacing:-0.25px;color:#5a5a5a;line-height:16px">Devi-001</div><div style="position:absolute;left:542.85px;width:300px;text-align:center;top:600.8px;white-space:nowrap;font-size:13.6px;letter-spacing:-0.25px;color:#5a5a5a;line-height:16px">25</div><div style="position:absolute;left:620.45px;width:300px;text-align:center;top:600.8px;white-space:nowrap;font-size:13.6px;letter-spacing:-0.25px;color:#5a5a5a;line-height:16px">30</div><div style="position:absolute;left:708.7px;width:300px;text-align:center;top:600.8px;white-space:nowrap;font-size:13.6px;letter-spacing:-0.25px;color:#5a5a5a;line-height:16px">45</div><div style="position:absolute;left:807.05px;width:300px;text-align:center;top:600.8px;white-space:nowrap;font-size:13.6px;letter-spacing:-0.25px;color:#5a5a5a;line-height:16px">10</div><div style="position:absolute;left:900.3px;width:300px;text-align:center;top:600.8px;white-space:nowrap;font-size:13.6px;letter-spacing:-0.25px;color:#5a5a5a;line-height:16px">11</div><div style="position:absolute;left:993.35px;width:300px;text-align:center;top:600.8px;white-space:nowrap;font-size:13.6px;letter-spacing:-0.25px;color:#5a5a5a;line-height:16px">14.8</div><div style="position:absolute;left:1099.25px;width:300px;text-align:center;top:600.8px;white-space:nowrap;font-size:13.6px;letter-spacing:-0.25px;color:#5a5a5a;line-height:16px">Yes</div><div style="position:absolute;left:1318px;top:593.3px;width:120px;height:26px;line-height:0"><svg width="120" height="26" viewBox="0 0 120 26"><path d="M15.8 7.25 L7 7.25 Q5.55 7.25 5.55 8.7 L5.55 19.2 Q5.55 20.65 7 20.65 L17.7 20.65 Q19.15 20.65 19.15 19.2 L19.15 14.5" stroke="#000" stroke-width="2.1" fill="none"/><path d="M11.2 16.7 L19.9 8.1" stroke="#000" stroke-width="4" fill="none"/><path d="M9.8 18.3 L10.1 14.6 L13.4 17.9 Z" fill="#000"/><path d="M21.1 6.8 L22.3 5.6" stroke="#000" stroke-width="3.9" stroke-linecap="round" fill="none"/><rect x="31" y="8.7" width="1" height="13.9" fill="#e2dede"/><path d="M38.8 12.9 C41 8, 45 6, 49.2 6 C53.4 6, 57.4 8, 59.6 12.9 C57.4 17.8, 53.4 19.8, 49.2 19.8 C45 19.8, 41 17.8, 38.8 12.9 Z" fill="#000"/><circle cx="49.3" cy="12.8" r="5.3" fill="#fff"/><circle cx="49.3" cy="12.8" r="4.2" fill="#000"/><circle cx="47.9" cy="11.3" r="0.9" fill="#fff"/><rect x="65.8" y="8.7" width="1" height="14" fill="#e2dede"/><path d="M75.15 7.3 A2.55 2.55 0 0 1 80.25 7.3 L80.25 14.6 A3.65 3.65 0 1 1 75.15 14.6 Z" fill="none" stroke="#000" stroke-width="1.5"/><rect x="76.75" y="10.6" width="1.9" height="6.6" fill="#000"/><circle cx="77.7" cy="17.2" r="2.3" fill="#000"/><rect x="88.8" y="8.7" width="1" height="14" fill="#e2dede"/><path d="M98.9 7.7 A2.7 2.7 0 0 1 104.3 7.7 L104.3 14.05 A4 4 0 1 1 98.9 14.05 Z" fill="none" stroke="#000" stroke-width="2"/><circle cx="101.6" cy="17.1" r="1.2" fill="#000"/><path d="M101 16.6 L101.6 14.2 L102.2 16.6 Z" fill="#000"/><circle cx="111.1" cy="7.6" r="2.6" fill="none" stroke="#000" stroke-width="1.7"/></svg></div><div style="position:absolute;left:1449.5px;top:245px;width:19.1px;height:383.5px;background:#f1f1f1"></div><div style="position:absolute;left:1468.6px;top:243px;width:1.5px;height:385.5px;background:#d6d6d6"></div><div style="position:absolute;left:85px;top:243px;width:2px;height:385.5px;background:#d2d2d2"></div><div style="position:absolute;left:1455px;top:251px;width:9px;height:5px;line-height:0"><svg width="9" height="5" viewBox="0 0 9 5"><path d="M0 5 L4.5 0 L9 5 Z" fill="#a3a3a3"/></svg></div><div style="position:absolute;left:1452px;top:263px;width:14.5px;height:18px;background:#c1c1c1"></div><div style="position:absolute;left:1455px;top:615px;width:9px;height:5px;line-height:0"><svg width="9" height="5" viewBox="0 0 9 5"><path d="M0 0 L4.5 5 L9 0 Z" fill="#505050"/></svg></div><div style="position:absolute;left:86px;top:625px;width:1363.5px;height:3.5px;background:#e6e6e6"></div>
</body></html>
